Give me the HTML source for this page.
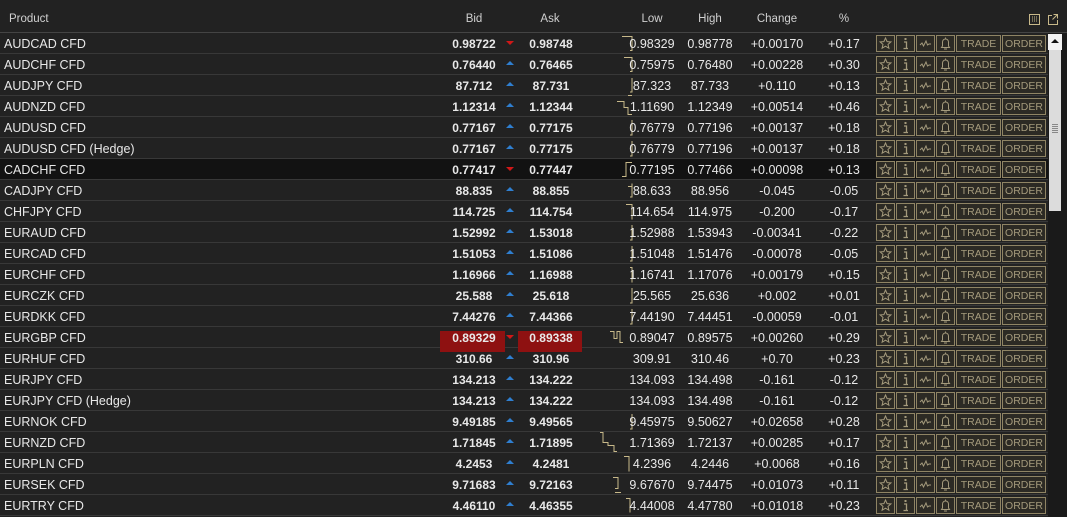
<!DOCTYPE html>
<html><head><meta charset="utf-8"><style>
*{margin:0;padding:0;box-sizing:border-box}
body{width:1067px;height:517px;overflow:hidden;background:#222;font-family:"Liberation Sans",sans-serif;color:#e8e8e8;position:relative}
.hd{position:absolute;top:0;left:0;width:1067px;height:33px;border-bottom:1px solid #444;font-size:11.5px;color:#d0d0d0}
.hd span{position:absolute;top:13px;text-align:center}
.r{position:absolute;left:0;width:1048px;height:21px;border-bottom:1px solid #383838;font-size:12.5px}
.r div{position:absolute;top:4px;text-align:center;white-space:nowrap}
.p{left:4px;text-align:left!important}
.b{left:434px;width:80px;font-weight:bold;font-size:12px}
.a{left:511px;width:80px;font-weight:bold;font-size:12px}
.l{left:622px;width:60px}
.h{left:680px;width:60px}
.c{left:737px;width:80px}
.pc{left:814px;width:60px}
.ar{left:505px;width:10px;top:0!important;height:21px}
.up{position:absolute;left:1px;top:7px;width:0;height:0;border-left:4px solid transparent;border-right:4px solid transparent;border-bottom:4px solid #2f7fd0}
.dn{position:absolute;left:1px;top:8px;width:0;height:0;border-left:4px solid transparent;border-right:4px solid transparent;border-top:4px solid #d01818}
.sp{position:absolute;left:600px;top:0;width:36px;height:21px}
.sel{background:#121212}
.red{position:absolute;top:0;height:21px;background:#8e1111}
</style></head><body>
<div class="hd"><span style="left:9px">Product</span><span style="left:454px;width:40px">Bid</span><span style="left:530px;width:40px">Ask</span><span style="left:627px;width:50px">Low</span><span style="left:685px;width:50px">High</span><span style="left:747px;width:60px">Change</span><span style="left:829px;width:30px">%</span>
<svg style="position:absolute;left:1029px;top:14px" width="11" height="11"><rect x="0.5" y="0.5" width="10" height="10" fill="none" stroke="#c8b98a"/><path d="M3 3h1M5 3h1M7 3h1M3 5h1M5 5h1M7 5h1M3 7h1M5 7h1M7 7h1" stroke="#c8b98a"/></svg>
<svg style="position:absolute;left:1047px;top:13px" width="12" height="12"><path d="M5 2.5H1.5v9h9V7M6.5 1.5h4v4M10.5 1.5l-5 5" fill="none" stroke="#c8b98a"/></svg></div>
<div style="position:absolute;left:1048px;top:33px;width:19px;height:484px;background:#1a1a1a"></div>
<div style="position:absolute;left:1048px;top:34px;width:14px;height:16px;background:#f2f2f2"><div style="position:absolute;left:3px;top:5px;border-left:4px solid transparent;border-right:4px solid transparent;border-bottom:4px solid #111"></div></div>
<div style="position:absolute;left:1049px;top:50px;width:12px;height:161px;background:#dcdcdc"><div style="position:absolute;left:3px;top:74px;width:6px;height:9px;background:repeating-linear-gradient(#888 0 1px,transparent 1px 2px)"></div></div>

<div class="r" style="top:33px"><div class="p">AUDCAD CFD</div><div class="b">0.98722</div><div class="ar"><i class="dn"></i></div><div class="a">0.98748</div><svg class="sp"><path d="M22 3.5h10v14h-2" fill="none" stroke="#c8b98a"/></svg><div class="l">0.98329</div><div class="h">0.98778</div><div class="c">+0.00170</div><div class="pc">+0.17</div></div>
<div class="r" style="top:54px"><div class="p">AUDCHF CFD</div><div class="b">0.76440</div><div class="ar"><i class="up"></i></div><div class="a">0.76465</div><svg class="sp"><path d="M24 3.5h8v14h-2" fill="none" stroke="#c8b98a"/></svg><div class="l">0.75975</div><div class="h">0.76480</div><div class="c">+0.00228</div><div class="pc">+0.30</div></div>
<div class="r" style="top:75px"><div class="p">AUDJPY CFD</div><div class="b">87.712</div><div class="ar"><i class="up"></i></div><div class="a">87.731</div><svg class="sp"><path d="M32 3v14h-2M28 20.5h4" fill="none" stroke="#c8b98a"/></svg><div class="l">87.323</div><div class="h">87.733</div><div class="c">+0.110</div><div class="pc">+0.13</div></div>
<div class="r" style="top:96px"><div class="p">AUDNZD CFD</div><div class="b">1.12314</div><div class="ar"><i class="up"></i></div><div class="a">1.12344</div><svg class="sp"><path d="M17 5.5h7v6h4v7h4" fill="none" stroke="#c8b98a"/></svg><div class="l">1.11690</div><div class="h">1.12349</div><div class="c">+0.00514</div><div class="pc">+0.46</div></div>
<div class="r" style="top:117px"><div class="p">AUDUSD CFD</div><div class="b">0.77167</div><div class="ar"><i class="up"></i></div><div class="a">0.77175</div><svg class="sp"><path d="M32 3v15h-2" fill="none" stroke="#c8b98a"/></svg><div class="l">0.76779</div><div class="h">0.77196</div><div class="c">+0.00137</div><div class="pc">+0.18</div></div>
<div class="r" style="top:138px"><div class="p">AUDUSD CFD (Hedge)</div><div class="b">0.77167</div><div class="ar"><i class="up"></i></div><div class="a">0.77175</div><svg class="sp"><path d="M32 3v15h-2" fill="none" stroke="#c8b98a"/></svg><div class="l">0.76779</div><div class="h">0.77196</div><div class="c">+0.00137</div><div class="pc">+0.18</div></div>
<div class="r sel" style="top:159px"><div class="p">CADCHF CFD</div><div class="b">0.77417</div><div class="ar"><i class="dn"></i></div><div class="a">0.77447</div><svg class="sp"><path d="M22 17.5h4v-14h6" fill="none" stroke="#c8b98a"/></svg><div class="l">0.77195</div><div class="h">0.77466</div><div class="c">+0.00098</div><div class="pc">+0.13</div></div>
<div class="r" style="top:180px"><div class="p">CADJPY CFD</div><div class="b">88.835</div><div class="ar"><i class="up"></i></div><div class="a">88.855</div><svg class="sp"><path d="M28 6.5h4v-3M32 6v11h-2" fill="none" stroke="#c8b98a"/></svg><div class="l">88.633</div><div class="h">88.956</div><div class="c">-0.045</div><div class="pc">-0.05</div></div>
<div class="r" style="top:201px"><div class="p">CHFJPY CFD</div><div class="b">114.725</div><div class="ar"><i class="up"></i></div><div class="a">114.754</div><svg class="sp"><path d="M26 3.5h6v15" fill="none" stroke="#c8b98a"/></svg><div class="l">114.654</div><div class="h">114.975</div><div class="c">-0.200</div><div class="pc">-0.17</div></div>
<div class="r" style="top:222px"><div class="p">EURAUD CFD</div><div class="b">1.52992</div><div class="ar"><i class="up"></i></div><div class="a">1.53018</div><svg class="sp"><path d="M32 3v15h-2" fill="none" stroke="#c8b98a"/></svg><div class="l">1.52988</div><div class="h">1.53943</div><div class="c">-0.00341</div><div class="pc">-0.22</div></div>
<div class="r" style="top:243px"><div class="p">EURCAD CFD</div><div class="b">1.51053</div><div class="ar"><i class="up"></i></div><div class="a">1.51086</div><svg class="sp"><path d="M32 3v15h-2" fill="none" stroke="#c8b98a"/></svg><div class="l">1.51048</div><div class="h">1.51476</div><div class="c">-0.00078</div><div class="pc">-0.05</div></div>
<div class="r" style="top:264px"><div class="p">EURCHF CFD</div><div class="b">1.16966</div><div class="ar"><i class="up"></i></div><div class="a">1.16988</div><svg class="sp"><path d="M30 3.5h2v15" fill="none" stroke="#c8b98a"/></svg><div class="l">1.16741</div><div class="h">1.17076</div><div class="c">+0.00179</div><div class="pc">+0.15</div></div>
<div class="r" style="top:285px"><div class="p">EURCZK CFD</div><div class="b">25.588</div><div class="ar"><i class="up"></i></div><div class="a">25.618</div><svg class="sp"><path d="M32 3v15h-2" fill="none" stroke="#c8b98a"/></svg><div class="l">25.565</div><div class="h">25.636</div><div class="c">+0.002</div><div class="pc">+0.01</div></div>
<div class="r" style="top:306px"><div class="p">EURDKK CFD</div><div class="b">7.44276</div><div class="ar"><i class="up"></i></div><div class="a">7.44366</div><svg class="sp"><path d="M32 3v15h-2" fill="none" stroke="#c8b98a"/></svg><div class="l">7.44190</div><div class="h">7.44451</div><div class="c">-0.00059</div><div class="pc">-0.01</div></div>
<div class="r" style="top:327px"><div class="red" style="left:440px;width:65px"></div><div class="red" style="left:518px;width:64px"></div><div class="p">EURGBP CFD</div><div class="b">0.89329</div><div class="ar"><i class="dn"></i></div><div class="a">0.89338</div><svg class="sp"><path d="M10 4.5h4v7h3v-7h3v11h3" fill="none" stroke="#c8b98a"/></svg><div class="l">0.89047</div><div class="h">0.89575</div><div class="c">+0.00260</div><div class="pc">+0.29</div></div>
<div class="r" style="top:348px"><div class="p">EURHUF CFD</div><div class="b">310.66</div><div class="ar"><i class="up"></i></div><div class="a">310.96</div><div class="l">309.91</div><div class="h">310.46</div><div class="c">+0.70</div><div class="pc">+0.23</div></div>
<div class="r" style="top:369px"><div class="p">EURJPY CFD</div><div class="b">134.213</div><div class="ar"><i class="up"></i></div><div class="a">134.222</div><div class="l">134.093</div><div class="h">134.498</div><div class="c">-0.161</div><div class="pc">-0.12</div></div>
<div class="r" style="top:390px"><div class="p">EURJPY CFD (Hedge)</div><div class="b">134.213</div><div class="ar"><i class="up"></i></div><div class="a">134.222</div><div class="l">134.093</div><div class="h">134.498</div><div class="c">-0.161</div><div class="pc">-0.12</div></div>
<div class="r" style="top:411px"><div class="p">EURNOK CFD</div><div class="b">9.49185</div><div class="ar"><i class="up"></i></div><div class="a">9.49565</div><svg class="sp"><path d="M32 3v15h-2" fill="none" stroke="#c8b98a"/></svg><div class="l">9.45975</div><div class="h">9.50627</div><div class="c">+0.02658</div><div class="pc">+0.28</div></div>
<div class="r" style="top:432px"><div class="p">EURNZD CFD</div><div class="b">1.71845</div><div class="ar"><i class="up"></i></div><div class="a">1.71895</div><svg class="sp"><path d="M0 0.5h3v10h5v3h6v6h3" fill="none" stroke="#c8b98a"/></svg><div class="l">1.71369</div><div class="h">1.72137</div><div class="c">+0.00285</div><div class="pc">+0.17</div></div>
<div class="r" style="top:453px"><div class="p">EURPLN CFD</div><div class="b">4.2453</div><div class="ar"><i class="up"></i></div><div class="a">4.2481</div><svg class="sp"><path d="M24 3.5h5v15" fill="none" stroke="#c8b98a"/></svg><div class="l">4.2396</div><div class="h">4.2446</div><div class="c">+0.0068</div><div class="pc">+0.16</div></div>
<div class="r" style="top:474px"><div class="p">EURSEK CFD</div><div class="b">9.71683</div><div class="ar"><i class="up"></i></div><div class="a">9.72163</div><svg class="sp"><path d="M13 3.5h5v11h-3M15 18.5h6" fill="none" stroke="#c8b98a"/></svg><div class="l">9.67670</div><div class="h">9.74475</div><div class="c">+0.01073</div><div class="pc">+0.11</div></div>
<div class="r" style="top:495px"><div class="p">EURTRY CFD</div><div class="b">4.46110</div><div class="ar"><i class="up"></i></div><div class="a">4.46355</div><svg class="sp"><path d="M26 3.5h4v14" fill="none" stroke="#c8b98a"/></svg><div class="l">4.44008</div><div class="h">4.47780</div><div class="c">+0.01018</div><div class="pc">+0.23</div></div>

<svg width="0" height="0" style="position:absolute"><defs>
<g id="btns">
<rect x="0.5" y="0.5" width="18" height="16" fill="#2c2a24" stroke="#8f8464"/>
<path d="M9.5 3l1.6 3.6 3.8.3-2.9 2.5.9 3.8-3.4-2-3.4 2 .9-3.8-2.9-2.5 3.8-.3z" fill="none" stroke="#a49a7c"/>
<rect x="20.5" y="0.5" width="18" height="16" fill="#2c2a24" stroke="#8f8464"/>
<rect x="28.5" y="3" width="2" height="2" fill="#a49a7c"/><path d="M28 7h2.5v6M27.5 13.5h4.5" stroke="#a49a7c" stroke-width="1.3" fill="none"/>
<rect x="40.5" y="0.5" width="18" height="16" fill="#2c2a24" stroke="#8f8464"/>
<path d="M44 10l2-2 1.5 3 2.5-5 1.5 4 1.5-1h2" fill="none" stroke="#a49a7c"/>
<rect x="60.5" y="0.5" width="18" height="16" fill="#2c2a24" stroke="#8f8464"/>
<path d="M69.5 2.5v1M66.5 11V7a3 3 0 0 1 6 0v4l1 1.5h-8z M68 14h3" fill="none" stroke="#a49a7c"/>
<rect x="80.5" y="0.5" width="44" height="16" fill="#2c2a24" stroke="#8f8464"/>
<text x="102.5" y="12" font-family="Liberation Sans,sans-serif" font-size="10.5" fill="#a49a7c" text-anchor="middle">TRADE</text>
<rect x="126.5" y="0.5" width="43" height="16" fill="#2c2a24" stroke="#8f8464"/>
<text x="148" y="12" font-family="Liberation Sans,sans-serif" font-size="10.5" fill="#a49a7c" text-anchor="middle">ORDER</text>
</g></defs></svg>
<svg style="position:absolute;left:876px;top:35px" width="171" height="480">
<use href="#btns" y="0"/><use href="#btns" y="21"/><use href="#btns" y="42"/><use href="#btns" y="63"/><use href="#btns" y="84"/><use href="#btns" y="105"/><use href="#btns" y="126"/><use href="#btns" y="147"/><use href="#btns" y="168"/><use href="#btns" y="189"/><use href="#btns" y="210"/><use href="#btns" y="231"/><use href="#btns" y="252"/><use href="#btns" y="273"/><use href="#btns" y="294"/><use href="#btns" y="315"/><use href="#btns" y="336"/><use href="#btns" y="357"/><use href="#btns" y="378"/><use href="#btns" y="399"/><use href="#btns" y="420"/><use href="#btns" y="441"/><use href="#btns" y="462"/>
</svg>
</body></html>
